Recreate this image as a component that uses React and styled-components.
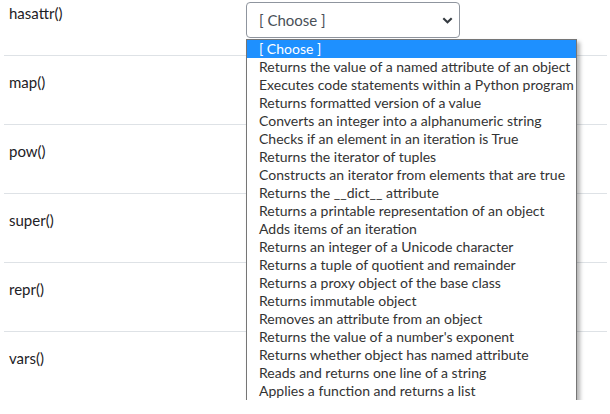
import styled, { createGlobalStyle } from "styled-components";

const GlobalStyle = createGlobalStyle`
  body {
    margin: 0;
    background: #fff;
    font-family: Lato, "Open Sans", sans-serif;
    color: #1d2125;
  }
`;

const functions = ["hasattr()", "map()", "pow()", "super()", "repr()", "vars()"];

const options = [
  "[ Choose ]",
  "Returns the value of a named attribute of an object",
  "Executes code statements within a Python program",
  "Returns formatted version of a value",
  "Converts an integer into a alphanumeric string",
  "Checks if an element in an iteration is True",
  "Returns the iterator of tuples",
  "Constructs an iterator from elements that are true",
  "Returns the __dict__ attribute",
  "Returns a printable representation of an object",
  "Adds items of an iteration",
  "Returns an integer of a Unicode character",
  "Returns a tuple of quotient and remainder",
  "Returns a proxy object of the base class",
  "Returns immutable object",
  "Removes an attribute from an object",
  "Returns the value of a number's exponent",
  "Returns whether object has named attribute",
  "Reads and returns one line of a string",
  "Applies a function and returns a list",
];

export default function App() {
  return (
    <>
      <GlobalStyle />
      <Page>
        {functions.map((fn, i) => (
          <Row key={fn} $first={i === 0}>
            <Label>{fn}</Label>
            {i === 0 && (
              <Cell>
                <SelectBox>
                  <span>[ Choose ]</span>
                  <Chevron />
                </SelectBox>
                <ListBox>
                  {options.map((opt, j) => (
                    <Option key={opt} $selected={j === 0}>
                      {opt}
                    </Option>
                  ))}
                </ListBox>
              </Cell>
            )}
          </Row>
        ))}
      </Page>
    </>
  );
}

const Chevron = () => (
  <svg width="11" height="7" viewBox="0 0 11 7">
    <path d="M1.3 1.3 L5.5 5.3 L9.7 1.3" fill="none" stroke="#343a40" strokeWidth="2.1" />
  </svg>
);

const Page = styled.div`
  padding: 0 3px 0 4px;
`;

const Row = styled.div`
  display: grid;
  grid-template-columns: 242px 1fr;
  align-items: start;
  height: ${(p) => (p.$first ? "55px" : "69px")};
  box-sizing: border-box;
  padding-top: ${(p) => (p.$first ? "2px" : "15px")};
  border-top: ${(p) => (p.$first ? "none" : "1px solid #dee2e6")};
`;

const Label = styled.div`
  padding-left: 5px;
  font-size: 15px;
  line-height: 22px;
`;

const Cell = styled.div`
  position: relative;
`;

const SelectBox = styled.div`
  display: flex;
  align-items: center;
  justify-content: space-between;
  width: 214px;
  height: 36px;
  box-sizing: border-box;
  padding: 0 6px 0 12px;
  border: 1px solid #8f959e;
  border-radius: 4px;
  background: #fff;
  font-size: 15px;
  color: #495057;
`;

const ListBox = styled.div`
  position: absolute;
  z-index: 10;
  top: 37px;
  left: 0;
  width: 331px;
  box-sizing: border-box;
  border: 1px solid #767676;
  background: #fff;
  box-shadow: 3px 3px 4px rgba(0, 0, 0, 0.3);
`;

const Option = styled.div`
  height: 18px;
  line-height: 17px;
  padding-left: 12px;
  font-size: 14px;
  white-space: nowrap;
  color: ${(p) => (p.$selected ? "#fff" : "#333")};
  background: ${(p) => (p.$selected ? "#1e90ff" : "transparent")};
`;
